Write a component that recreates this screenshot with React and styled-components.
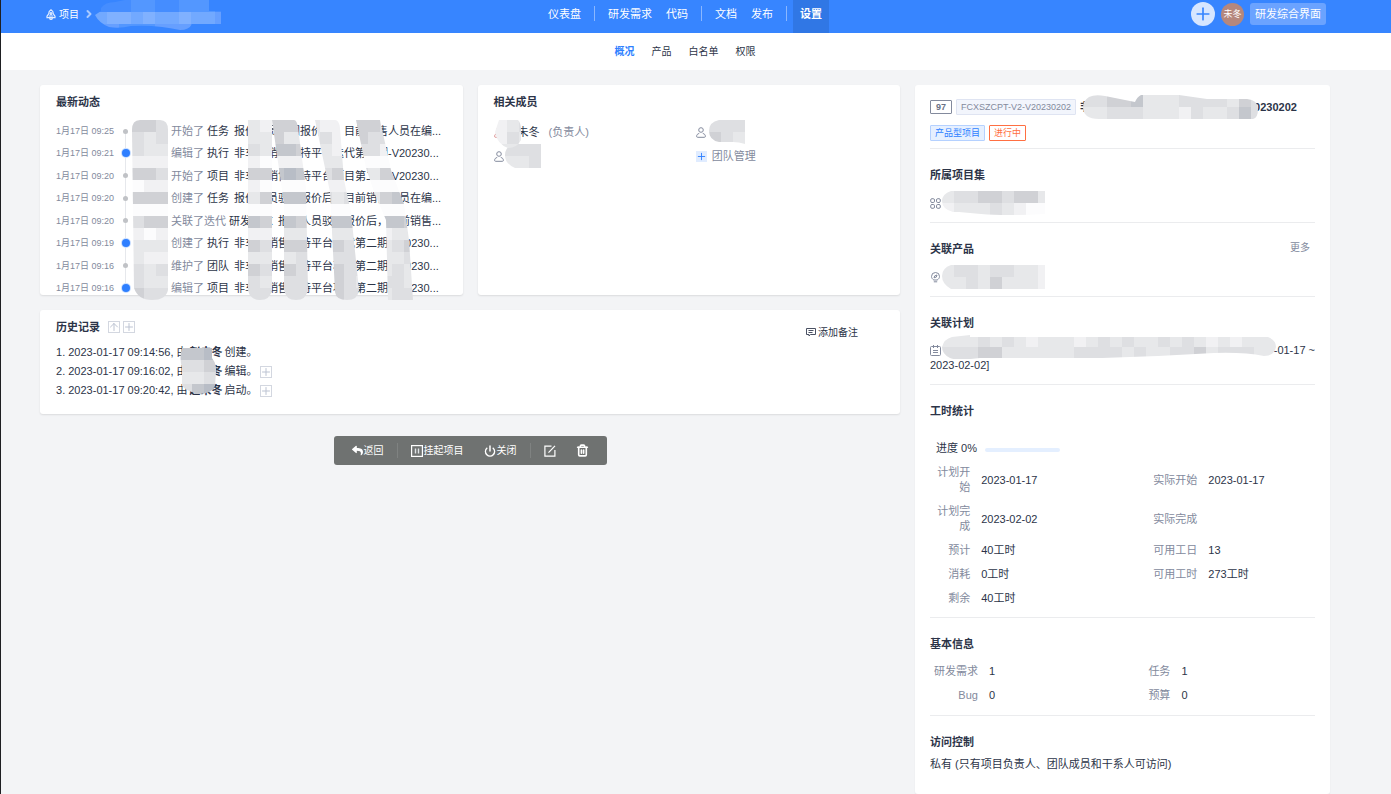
import React, { useId } from "react";
import styled, { createGlobalStyle, css } from "styled-components";
import { FaReply } from "react-icons/fa";
import { Power, Trash2, ChevronRight, Plus, ArrowUp } from "lucide-react";

const GlobalStyle = createGlobalStyle`
  * {
    box-sizing: border-box;
  }
  body {
    margin: 0;
    background: #f3f4f6;
    color: #2c3448;
    font-family: "Liberation Sans", "Noto Sans CJK SC", sans-serif;
    font-size: 11px;
    line-height: 15px;
  }
  a {
    color: inherit;
    text-decoration: none;
  }
  button {
    border: 0;
    padding: 0;
    background: none;
    color: inherit;
    font: inherit;
    cursor: pointer;
  }
  ul, ol {
    margin: 0;
    padding: 0;
    list-style: none;
  }
  svg {
    flex: none;
  }
`;

const Page = styled.div`
  min-height: 100vh;
  border-left: 1px solid #1e1f22;
`;

const Header = styled.header`
  display: grid;
  grid-template-columns: 1fr auto 1fr;
  padding: 0 61px 0 39px;
  background: #3785ff;
  color: #fff;
`;

const Crumbs = styled.div`
  display: flex;
  align-items: center;
  height: 28px;
  padding-left: 6px;
`;

const CrumbLink = styled.a`
  display: flex;
  align-items: center;
  gap: 3px;
  margin-right: 4px;
  font-size: 10px;
`;

const CrumbName = styled.span`
  display: flex;
  align-self: flex-start;
`;

const Nav = styled.nav`
  display: flex;
`;

const NavLink = styled.a`
  padding: 0 7px 5px;
  line-height: 28px;
  ${(props) =>
    props.$active &&
    css`
      background: #3077e5;
      font-weight: bold;
    `}
`;

const NavDivider = styled.span`
  width: 1px;
  height: 15px;
  margin: 6px 6px 0;
  background: #8ab7ff;
`;

const Actions = styled.div`
  display: flex;
  align-items: center;
  justify-content: flex-end;
  gap: 6px;
  height: 28px;
  padding-right: 4px;
`;

const AddButton = styled.button`
  display: flex;
  align-items: center;
  justify-content: center;
  width: 24px;
  height: 24px;
  border-radius: 50%;
  background: #d7e6ff;
  color: #3785ff;
`;

const Avatar = styled.span`
  width: 23px;
  border-radius: 50%;
  background: #b5877d;
  font-size: 9px;
  line-height: 23px;
  text-align: center;
`;

const ModeButton = styled.button`
  padding: 0 5px;
  border-radius: 3px;
  background: #6ba3ff;
  line-height: 22px;
`;

const SubNav = styled.nav`
  display: flex;
  justify-content: center;
  gap: 17px;
  padding: 0 61px 0 39px;
  background: #fff;
  font-size: 10px;
  line-height: 37px;
`;

const SubLink = styled.a`
  ${(props) =>
    props.$active &&
    css`
      color: #2e7fff;
      font-weight: bold;
    `}
`;

const Main = styled.main`
  display: grid;
  grid-template-columns: minmax(0, 1fr) 415px;
  align-items: start;
  gap: 15px;
  padding: 15px 61px 0 39px;
`;

const LeftColumn = styled.div`
  display: grid;
  grid-template-columns: repeat(2, minmax(0, 1fr));
  gap: 15px;
`;

const Card = styled.section`
  padding: 10px 16px 0;
  border-radius: 3px;
  background: #fff;
  box-shadow: 0 1px 2px rgba(0, 0, 0, 0.1);
`;

const HistoryCard = styled(Card)`
  grid-column: 1 / -1;
  display: flex;
  justify-content: space-between;
  padding-bottom: 14px;
`;

const Title = styled.h2`
  margin: 0;
  font-size: 11px;
  line-height: 14px;
`;

const Timeline = styled.ul`
  position: relative;
  display: flex;
  flex-direction: column;
  justify-content: space-between;
  height: 171px;
  margin-top: 15px;
`;

const TimelineRow = styled.li`
  display: grid;
  grid-template-columns: 66px 49px minmax(0, 1fr);
  line-height: 14px;
`;

const Time = styled.time`
  color: #838a9d;
  font-size: 9px;
`;

const DotCell = styled.span`
  display: flex;
  align-items: center;
`;

const Dot = styled.span`
  width: ${(props) => (props.$active ? 8 : 5)}px;
  height: ${(props) => (props.$active ? 8 : 5)}px;
  margin-left: ${(props) => (props.$active ? 0 : 1)}px;
  border-radius: 50%;
  background: ${(props) => (props.$active ? "#2e7fff" : "#c0c2c6")};
  box-shadow: ${(props) => (props.$active ? "0 0 0 1px #c9deff" : "none")};
  z-index: 1;
`;

const TimelineRail = styled.span`
  position: absolute;
  top: 8px;
  bottom: 8px;
  left: 69px;
  width: 1px;
  background: #e6e8ec;
`;

const Event = styled.span`
  display: flex;
  gap: 3px;
  white-space: nowrap;
`;

const Verb = styled.span`
  color: #838a9d;
`;

const EventLink = styled.a`
  margin-left: 2px;
`;

const Overlay = styled.span`
  position: absolute;
  display: block;
  top: ${(props) => props.$top}px;
  left: ${(props) => props.$left}px;
  z-index: 2;
  line-height: 0;
`;

const Members = styled.ul`
  display: grid;
  grid-template-columns: 1fr 1fr;
  gap: 0 14px;
  margin-top: 11px;
`;

const Member = styled.li`
  position: relative;
  display: flex;
  align-items: center;
  height: 24px;
  color: #838a9d;
`;

const MemberName = styled.span`
  margin: 0 9px 0 14px;
  color: #2c3448;
`;

const TeamLink = styled.a`
  display: flex;
  align-items: center;
  gap: 5px;
`;

const PlusBox = styled.span`
  display: flex;
  background: #e0ecff;
  color: #2e7fff;
`;

const HistoryHead = styled.div`
  display: flex;
  align-items: center;
  gap: 3px;
  height: 14px;

  ${Title} {
    margin-right: 5px;
  }
`;

const BoxButton = styled.button`
  display: inline-flex;
  align-items: center;
  justify-content: center;
  width: 12px;
  height: 12px;
  border: 1px solid #d3d7e0;
  color: #bcc3d2;
`;

const HistoryList = styled.ol`
  position: relative;
  margin-top: 9px;
  line-height: 19px;
`;

const HistoryItem = styled.li`
  display: flex;
  align-items: center;
  gap: 2px;
  height: 19px;
`;

const CommentButton = styled.button`
  display: flex;
  align-items: center;
  gap: 2px;
  height: 15px;
  margin: 5px 26px 0 0;
  font-size: 10px;
`;

const Toolbar = styled.div`
  grid-column: 1 / -1;
  justify-self: center;
  display: flex;
  align-items: center;
  height: 29px;
  margin-top: 7px;
  padding: 0 8px;
  border-radius: 3px;
  background: #6f7271;
  color: #fff;
  font-size: 10px;
`;

const ToolButton = styled.button`
  display: flex;
  align-items: center;
  gap: 1px;
  padding: 0 10px;
`;

const ToolDivider = styled.span`
  width: 1px;
  height: 15px;
  margin: 0 3px;
  background: #7f8281;
`;

const Sidebar = styled.aside`
  padding: 0 15px;
  border-radius: 3px;
  background: #fff;
  box-shadow: 0 1px 2px rgba(0, 0, 0, 0.06);
`;

const Section = styled.section`
  display: flex;
  flex-direction: column;
  padding: 19px 0 ${(props) => props.$bottom || 11}px;
  border-bottom: 1px solid #ebecee;

  &:last-child {
    border-bottom: 0;
  }
`;

const Summary = styled(Section)`
  padding: 14px 0 7px;
`;

const SummaryRow = styled.div`
  display: flex;
  align-items: center;
  gap: 4px;
  height: 16px;

  & + & {
    margin-top: 10px;
  }
`;

const ProjectTitle = styled.h1`
  display: flex;
  align-items: center;
  margin: 0;
  font-size: 11px;
`;

const IdLabel = styled.span`
  padding: 0 5px;
  border: 1px solid #838a9d;
  border-radius: 1px;
  color: #6a7285;
  font-size: 9px;
  font-weight: bold;
  line-height: 12px;
`;

const Tag = styled.span`
  padding: 0 4px;
  border: 1px solid ${(props) => props.$border};
  border-radius: 1px;
  background: ${(props) => props.$bg};
  color: ${(props) => props.$color};
  font-size: 9px;
  line-height: 14px;
`;

const SectionHead = styled.div`
  display: flex;
  justify-content: space-between;
  height: 14px;
  margin-bottom: 8px;
`;

const MoreLink = styled.a`
  padding-right: 5px;
  color: #838a9d;
  font-size: 10px;
  line-height: 12px;
`;

const Item = styled.div`
  display: flex;
  align-items: center;
  height: ${(props) => props.$height || 16}px;
  margin-top: 5px;
  color: #838a9d;
`;

const PlanName = styled.a`
  display: flex;
  flex: 1;
  align-items: center;
  justify-content: flex-end;
  color: #2c3448;
  white-space: nowrap;
`;

const Progress = styled.div`
  display: flex;
  align-items: center;
  gap: 8px;
  height: 24px;
  margin-top: 10px;
  padding-left: 6px;
`;

const ProgressTrack = styled.span`
  width: 75px;
  height: 4px;
  margin-top: 4px;
  border-radius: 2px;
  background: #e4efff;
`;

const ProgressBar = styled.span`
  display: block;
  height: 100%;
  border-radius: 2px;
  background: #2e7fff;
`;

const DataTable = styled.table`
  width: 100%;
  border-collapse: collapse;
  table-layout: fixed;

  th {
    padding: 5px 6px 4px 3px;
    color: #838a9d;
    font-weight: normal;
    text-align: right;
  }

  td {
    padding: 5px 0 4px 5px;
  }
`;

const PALETTE = [
  "transparent",
  "#fcfcfd",
  "#f1f1f3",
  "#e7e8ea",
  "#dedfe2",
  "#d0d1d5",
  "#c4c7cd",
  "#b8bdc6",
];

const CELL = 12;

// Blocks hiding private names: one digit per cell, cut to the brush shape.
const Mosaic = ({ width, height, rows, shape, colors = PALETTE }) => {
  const id = useId();
  return (
    <svg width={width} height={height} aria-hidden="true">
      <clipPath id={id}>
        <path d={shape} />
      </clipPath>
      <g clipPath={`url(#${id})`} shapeRendering="crispEdges">
        {rows.map((row, y) =>
          row
            .split("")
            .map((tone, x) => (
              <rect
                key={`${x}-${y}`}
                x={x * CELL}
                y={y * CELL}
                width={CELL}
                height={CELL}
                fill={colors[tone]}
              />
            ))
        )}
      </g>
    </svg>
  );
};

const Masked = styled.span`
  display: flex;
  position: relative;
  z-index: 1;
  margin: ${(props) => props.$margin || "0"};
`;

const ProjectIcon = () => (
  <svg width="10" height="11" viewBox="0 0 10 11" fill="none" stroke="#e3eeff" strokeWidth="1.2">
    <path d="M5 .8C3.200 1.800 2.600 3.100 2.700 4.800L1 7.200v1.500h8V7.200L7.300 4.800C7.400 3.100 6.800 1.800 5 .8z" />
    <circle cx="5" cy="4.500" r=".9" />
    <path d="M2.800 7h4.400M3.800 9v.8l1.200.7 1.200-.7V9" />
  </svg>
);

const UserIcon = ({ color = "#838a9d" }) => (
  <svg width="10" height="11" viewBox="0 0 10 11" fill="none" stroke={color}>
    <circle cx="5" cy="3" r="2.300" />
    <path d="M3.200 6.500C1.500 6.700.6 8 .6 9.300q0 1 1 1h6.800q1 0 1-1C9.400 8 8.500 6.700 6.800 6.500" />
  </svg>
);

const ProgramIcon = () => (
  <svg width="11" height="11" viewBox="0 0 11 11" fill="none" stroke="#838a9d">
    <rect x=".7" y=".7" width="3.800" height="3.800" rx="1.300" />
    <rect x="6.500" y=".7" width="3.800" height="3.800" rx="1.300" />
    <rect x=".7" y="6.500" width="3.800" height="3.800" rx="1.300" />
    <rect x="6.500" y="6.500" width="3.800" height="3.800" rx="1.300" />
  </svg>
);

const ProductIcon = () => (
  <svg width="11" height="11" viewBox="0 0 11 11" fill="none" stroke="#838a9d">
    <path d="M3.800 8C2.500 7.200 1.500 6 1.500 4.500a4 4 0 0 1 8 0C9.500 6 8.500 7.200 7.200 8zM3.800 9.800h3.400" />
    <path d="M4 5.800 4.700 3.900 7 3 6.300 5.100z" />
  </svg>
);

const PlanIcon = () => (
  <svg width="11" height="11" viewBox="0 0 11 11" fill="none" stroke="#838a9d">
    <rect x=".5" y="1.500" width="10" height="9" rx="1" />
    <path d="M3.500 0v3M7.500 0v3M3 5.500h5M3 7.500h5" />
  </svg>
);

const CommentIcon = () => (
  <svg width="10" height="9" viewBox="0 0 10 9" fill="none" stroke="#4a5163">
    <path d="M.5.5h9v6H4.500L3 8V6.500H.5zM2.500 2.500h5M2.500 4.500h4" />
  </svg>
);

const PauseIcon = () => (
  <svg width="12" height="12" viewBox="0 0 12 12" fill="none" stroke="#fff">
    <rect x=".6" y=".6" width="10.800" height="10.800" strokeWidth="1.200" />
    <path d="M4.500 3.500v5M7.500 3.500v5" strokeWidth="1.400" stroke="#dfe3e6" />
  </svg>
);

const EditIcon = () => (
  <svg width="12" height="12" viewBox="0 0 12 12" fill="none" stroke="#fff" strokeWidth="1.200">
    <path d="M7.500 1.100H.9v10h10V5" />
    <path d="M4.500 7.700 11 .9" />
  </svg>
);

const quote = "报价人员驳回报价后，目前销售人员在编...";
const activities = [
  { time: "09:25", verb: "开始了", type: "任务", name: quote },
  { time: "09:21", verb: "编辑了", type: "执行", name: "非车险销售支持平台迭代第二期-V20230...", active: true },
  { time: "09:20", verb: "开始了", type: "项目", name: "非车险销售支持平台项目第二期-V20230..." },
  { time: "09:20", verb: "创建了", type: "任务", name: quote },
  { time: "09:20", verb: "关联了迭代", type: "研发需求", name: "报价人员驳回报价后，目前销售..." },
  { time: "09:19", verb: "创建了", type: "执行", name: "非车险销售支持平台迭代第二期-V20230...", active: true },
  { time: "09:16", verb: "维护了", type: "团队", name: "非车险销售支持平台项目第二期-V20230..." },
  { time: "09:16", verb: "编辑了", type: "项目", name: "非车险销售支持平台项目第二期-V20230...", active: true },
];

const actorRows = [
  "5544", "4344", "4333", "2222", "5544", "1222", "5554", "1111",
  "4555", "2122", "3334", "3223", "4344", "4334", "5444",
];

const eventRows = [
  "32555322355444",
  "33533342254433",
  "43665432344266",
  "21222233211123",
  "55676545543555",
  "21111122211111",
  "35666443433566",
  "11111111111111",
  "65665566655665",
  "22233223322233",
  "54655455433345",
  "33334344443334",
  "54554455443343",
  "43444455433443",
  "44444555443344",
];

const eventShape = [
  "M0 0h24v170q-2 10-12 10t-12-10z",
  "M24 0h22q3 0 4 8l8 60 2 102q-2 10-12 10t-12-10V84z",
  "M67 0h20q4 0 5 8l4 52 7 32 8 78q-1 10-12 10t-12-8l-5-100z",
  "M108 0h24l11 50 13 34 5 36 4 60h-25l-2-80-12-28-8-24z",
].join("");

const history = [
  { date: "2023-01-17 09:14:56", action: "创建" },
  { date: "2023-01-17 09:16:02", action: "编辑", detail: true },
  { date: "2023-01-17 09:20:42", action: "启动", detail: true },
];

const hours = [
  ["计划开始", "2023-01-17", "实际开始", "2023-01-17"],
  ["计划完成", "2023-02-02", "实际完成", ""],
  ["预计", "40工时", "可用工日", "13"],
  ["消耗", "0工时", "可用工时", "273工时"],
  ["剩余", "40工时"],
];

const basics = [
  ["研发需求", "1", "任务", "1"],
  ["Bug", "0", "预算", "0"],
];

const InfoTable = ({ rows, widths }) => (
  <DataTable>
    <colgroup>
      {widths.map((width, index) => (
        <col key={index} style={{ width: `${width}%` }} />
      ))}
    </colgroup>
    <tbody>
      {rows.map((row) => (
        <tr key={row[0]}>
          <th scope="row">{row[0]}</th>
          <td>{row[1]}</td>
          {row[2] && <th scope="row">{row[2]}</th>}
          {row[2] && <td>{row[3]}</td>}
        </tr>
      ))}
    </tbody>
  </DataTable>
);

const TopBar = () => (
  <Header>
    <Crumbs>
      <CrumbLink href="#projects">
        <ProjectIcon />
        项目
      </CrumbLink>
      <ChevronRight size={12} strokeWidth={4} color="#a9caff" />
      <CrumbName>
        <Mosaic
          width={126}
          height={30}
          colors={["transparent", "#458dff", "#5397ff", "#669fff", "#72a9ff", "#80b1ff"]}
          rows={["11122112221", "45545445443", "33222333222"]}
          shape="M6 11V8q4-6 14-6l10-2h84v11h12v13H97q-3 6-12 6-10-2-18-3-16-2-31-1-12 3-22 1-10-4-14-12z"
        />
      </CrumbName>
    </Crumbs>
    <Nav>
      <NavLink href="#dashboard">仪表盘</NavLink>
      <NavDivider />
      <NavLink href="#story">研发需求</NavLink>
      <NavLink href="#code">代码</NavLink>
      <NavDivider />
      <NavLink href="#doc">文档</NavLink>
      <NavLink href="#release">发布</NavLink>
      <NavDivider />
      <NavLink href="#settings" $active>
        设置
      </NavLink>
    </Nav>
    <Actions>
      <AddButton aria-label="添加">
        <Plus size={20} strokeWidth={2} />
      </AddButton>
      <Avatar>未冬</Avatar>
      <ModeButton>研发综合界面</ModeButton>
    </Actions>
  </Header>
);

const ActivityCard = () => (
  <Card>
    <Title>最新动态</Title>
    <Timeline>
      <TimelineRail as="li" aria-hidden="true" />
      {activities.map((item, index) => (
        <TimelineRow key={index}>
          <Time>1月17日 {item.time}</Time>
          <DotCell>
            <Dot $active={item.active} />
          </DotCell>
          <Event>
            <Verb>{item.verb}</Verb>
            <span>{item.type}</span>
            <EventLink href="#event">{item.name}</EventLink>
          </Event>
        </TimelineRow>
      ))}
      <Overlay as="li" $top={-4} $left={76} aria-hidden="true">
        <Mosaic
          width={37}
          height={180}
          rows={actorRows}
          shape="M0 10Q0 0 8 0h20q8 0 8 10v160q-2 10-16 10T2 168z"
        />
      </Overlay>
      <Overlay as="li" $top={-4} $left={192} aria-hidden="true">
        <Mosaic width={168} height={180} rows={eventRows} shape={eventShape} />
      </Overlay>
    </Timeline>
  </Card>
);

const MembersCard = () => (
  <Card>
    <Title>相关成员</Title>
    <Members>
      <Member>
        <UserIcon color="#d98c8c" />
        <MemberName>未冬</MemberName>
        (负责人)
        <Overlay $top={0} $left={1}>
          <Mosaic
            width={26}
            height={28}
            rows={["234", "243", "333"]}
            shape="M4 0h19q3 3 3 10v10q-4 8-13 8Q2 24 0 12z"
          />
        </Overlay>
      </Member>
      <Member>
        <UserIcon />
        <Masked $margin="0 0 0 3px">
          <Mosaic
            width={36}
            height={24}
            rows={["444", "543"]}
            shape="M10 0h26v24q-6-2-12-2H10Q0 20 0 11T10 0z"
          />
        </Masked>
      </Member>
      <Member>
        <UserIcon />
        <Masked $margin="0 0 0 1px">
          <Mosaic width={36} height={24} rows={["444", "334"]} shape="M10 0h26v24H10Q0 20 0 11T10 0z" />
        </Masked>
      </Member>
      <Member>
        <TeamLink href="#team">
          <PlusBox>
            <Plus size={11} strokeWidth={2} />
          </PlusBox>
          团队管理
        </TeamLink>
      </Member>
    </Members>
  </Card>
);

const HistoryPanel = () => (
  <HistoryCard>
    <div>
      <HistoryHead>
        <Title>历史记录</Title>
        <BoxButton aria-label="切换顺序">
          <ArrowUp size={12} />
        </BoxButton>
        <BoxButton aria-label="全部展开">
          <Plus size={12} />
        </BoxButton>
      </HistoryHead>
      <HistoryList>
        {history.map((item, index) => (
          <HistoryItem key={item.date}>
            <span>
              {index + 1}. {item.date}, 由
            </span>
            <strong>赵未冬</strong>
            <span>{item.action}。</span>
            {item.detail && (
              <BoxButton aria-label="展开">
                <Plus size={12} />
              </BoxButton>
            )}
          </HistoryItem>
        ))}
        <Overlay as="li" $top={5} $left={124} aria-hidden="true">
          <Mosaic
            width={36}
            height={46}
            rows={["667", "445", "334", "467"]}
            shape="M2 0h30v10q5 6 4 14l-1 14q-4 8-16 8Q8 44 2 38V20Q-1 10 2 0z"
          />
        </Overlay>
      </HistoryList>
    </div>
    <CommentButton>
      <CommentIcon />
      添加备注
    </CommentButton>
  </HistoryCard>
);

const ProjectSidebar = () => (
  <Sidebar>
    <Summary as="header">
      <SummaryRow>
        <IdLabel>97</IdLabel>
        <Tag $border="#dfe4f2" $bg="#f2f5fc" $color="#838a9d">
          FCXSZCPT-V2-V20230202
        </Tag>
        <ProjectTitle>
          非
          <Masked $margin="0 -4px 0 -8px">
            <Mosaic
              width={175}
              height={24}
              rows={["445563334444354", "334443332433464"]}
              shape="M6 2Q12-1 22 1l30 6q2-5 6-7h38l28 4h40q11 1 11 10 0 9-5 10H16Q0 24 0 12 0 6 6 2z"
            />
          </Masked>
          0230202
        </ProjectTitle>
      </SummaryRow>
      <SummaryRow>
        <Tag $border="#b5d1ff" $bg="#e6f0ff" $color="#2e7fff">
          产品型项目
        </Tag>
        <Tag $border="#ff6f42" $bg="#fff" $color="#ff6f42">
          进行中
        </Tag>
      </SummaryRow>
    </Summary>
    <Section>
      <SectionHead>
        <Title>所属项目集</Title>
      </SectionHead>
      <Item>
        <ProgramIcon />
        <Masked $margin="0 0 0 1px">
          <Mosaic
            width={103}
            height={24}
            rows={["344554553", "233343211"]}
            shape="M9 0h94v23q-40 2-64 0l-22-2H11Q0 18 0 10 0 3 9 0z"
          />
        </Masked>
      </Item>
    </Section>
    <Section>
      <SectionHead>
        <Title>关联产品</Title>
        <MoreLink href="#products">更多</MoreLink>
      </SectionHead>
      <Item>
        <ProductIcon />
        <Masked $margin="0 0 0 1px">
          <Mosaic
            width={103}
            height={24}
            rows={["344344332", "334353332"]}
            shape="M9 0h94v24H9Q0 19 0 11 0 3 9 0z"
          />
        </Masked>
      </Item>
    </Section>
    <Section>
      <SectionHead>
        <Title>关联计划</Title>
      </SectionHead>
      <Item $height={15}>
        <PlanIcon />
        <PlanName href="#plan">
          <Masked $margin="-8px -2px 0 0">
            <Mosaic
              width={334}
              height={24}
              rows={["3334343233323434334343232333", "4445533333344443433445344433"]}
              shape="M10 2 28 0v2h298q8 3 8 10-2 9-12 9-20-4-50-3l-56 3-56 2H38q-24 3-30 0Q0 19 0 12 2 4 10 2z"
            />
          </Masked>
          -01-17 ~
        </PlanName>
      </Item>
      <a href="#plan">2023-02-02]</a>
    </Section>
    <Section $bottom={7}>
      <SectionHead>
        <Title>工时统计</Title>
      </SectionHead>
      <Progress>
        进度 0%
        <ProgressTrack>
          <ProgressBar style={{ width: "0%" }} />
        </ProgressTrack>
      </Progress>
      <InfoTable rows={hours} widths={[12, 43, 16, 29]} />
    </Section>
    <Section $bottom={8}>
      <SectionHead>
        <Title>基本信息</Title>
      </SectionHead>
      <InfoTable rows={basics} widths={[14, 38, 12, 36]} />
    </Section>
    <Section $bottom={22}>
      <SectionHead>
        <Title>访问控制</Title>
      </SectionHead>
      私有 (只有项目负责人、团队成员和干系人可访问)
    </Section>
  </Sidebar>
);

const App = () => (
  <>
    <GlobalStyle />
    <Page>
      <TopBar />
      <SubNav>
        <SubLink href="#overview" $active>
          概况
        </SubLink>
        <SubLink href="#product">产品</SubLink>
        <SubLink href="#whitelist">白名单</SubLink>
        <SubLink href="#permission">权限</SubLink>
      </SubNav>
      <Main>
        <LeftColumn>
          <ActivityCard />
          <MembersCard />
          <HistoryPanel />
          <Toolbar role="toolbar">
            <ToolButton>
              <FaReply size={11} />
              返回
            </ToolButton>
            <ToolDivider />
            <ToolButton>
              <PauseIcon />
              挂起项目
            </ToolButton>
            <ToolButton>
              <Power size={12} strokeWidth={3} />
              关闭
            </ToolButton>
            <ToolDivider />
            <ToolButton aria-label="编辑">
              <EditIcon />
            </ToolButton>
            <ToolButton aria-label="删除">
              <Trash2 size={13} strokeWidth={3} />
            </ToolButton>
          </Toolbar>
        </LeftColumn>
        <ProjectSidebar />
      </Main>
    </Page>
  </>
);

export default App;
